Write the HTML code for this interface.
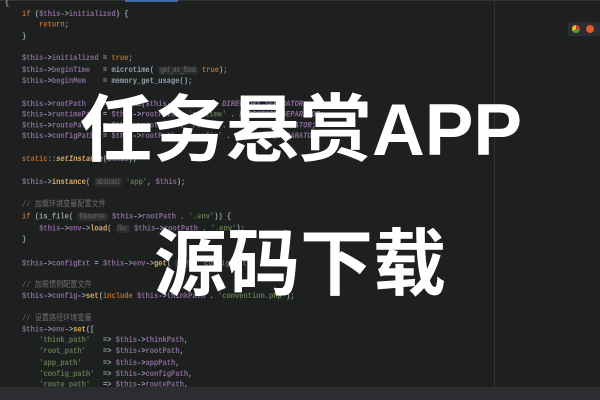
<!DOCTYPE html>
<html><head><meta charset="utf-8"><style>
html,body{margin:0;padding:0}
body{width:600px;height:400px;background:#1e1f1f;position:relative;overflow:hidden;font-family:"Liberation Mono","Noto Sans CJK SC",monospace}
.code{position:absolute;left:5px;top:-1px;font-size:7.1px;line-height:9.21px;color:#a9b7c6;white-space:pre;opacity:.85;transform:scaleY(1.2);transform-origin:0 0;font-weight:bold}
.p{color:#9876aa}.k{color:#cc7832}.s{color:#6a8759}.f{color:#ffc66d}.c{color:#7a7a7a;font-weight:normal}.h{background:#2f3030;color:#777;font-family:"Liberation Sans",sans-serif;font-size:6.5px;font-weight:normal;border-radius:2px;padding:0 2px}.i{color:#9876aa;font-style:italic}
.title{position:absolute;color:#fff;font-family:"Liberation Sans","Noto Sans CJK SC",sans-serif;font-weight:bold;font-size:73px;line-height:1;white-space:nowrap;letter-spacing:0}
</style></head><body>
<div style="position:absolute;left:0;top:0;width:600px;height:1px;background:#333"></div>
<div style="position:absolute;left:125px;top:0;width:53px;height:2px;background:#3d6ea8"></div>
<div style="position:absolute;left:494px;top:0;width:1px;height:387px;background:#303131"></div>
<div style="position:absolute;left:568px;top:22px;width:32px;height:14px;background:#2b2d30;border-radius:2px"></div>
<div style="position:absolute;left:572px;top:25px;width:8px;height:8px;border-radius:50%;background:conic-gradient(#d33 0 33%,#3a3 0 66%,#eb3 0)"></div>
<div style="position:absolute;left:586px;top:25px;width:8px;height:8px;border-radius:50%;background:#e5582a"></div>
<div class="code">{
    <span class="k">if</span> (<span class="p">$this</span>-><span class="p">initialized</span>) {
        <span class="k">return</span>;
    }

    <span class="p">$this</span>-><span class="p">initialized</span> = <span class="k">true</span>;
    <span class="p">$this</span>-><span class="p">beginTime</span>   = microtime( <span class="h">get_as_float</span> <span class="k">true</span>);
    <span class="p">$this</span>-><span class="p">beginMem</span>    = memory_get_usage();

    <span class="p">$this</span>-><span class="p">rootPath</span>    = dirname(<span class="p">$this</span>-><span class="p">appPath</span>) . <span class="i">DIRECTORY_SEPARATOR</span>;
    <span class="p">$this</span>-><span class="p">runtimePath</span> = <span class="p">$this</span>-><span class="p">rootPath</span> . <span class="s">'runtime'</span> . <span class="i">DIRECTORY_SEPARATOR</span>;
    <span class="p">$this</span>-><span class="p">routePath</span>   = <span class="p">$this</span>-><span class="p">rootPath</span> . <span class="s">'route'</span> . <span class="i">DIRECTORY_SEPARATOR</span>;
    <span class="p">$this</span>-><span class="p">configPath</span>  = <span class="p">$this</span>-><span class="p">rootPath</span> . <span class="s">'config'</span> . <span class="i">DIRECTORY_SEPARATOR</span>;

    <span class="k">static</span>::<span class="f" style="font-style:italic">setInstance</span>(<span class="p">$this</span>);

    <span class="p">$this</span>-><span class="f">instance</span>( <span class="h">abstract</span> <span class="s">'app'</span>, <span class="p">$this</span>);

    <span class="c">// 加载环境变量配置文件</span>
    <span class="k">if</span> (is_file( <span class="h">filename:</span> <span class="p">$this</span>-><span class="p">rootPath</span> . <span class="s">'.env'</span>)) {
        <span class="p">$this</span>-><span class="p">env</span>-><span class="f">load</span>( <span class="h">file:</span> <span class="p">$this</span>-><span class="p">rootPath</span> . <span class="s">'.env'</span>);
    }

    <span class="p">$this</span>-><span class="p">configExt</span> = <span class="p">$this</span>-><span class="p">env</span>-><span class="f">get</span>( <span class="h">name</span> <span class="s">'config_ext'</span>, <span class="s">'.php'</span>);

    <span class="c">// 加载惯例配置文件</span>
    <span class="p">$this</span>-><span class="p">config</span>-><span class="f">set</span>(<span class="k">include</span> <span class="p">$this</span>-><span class="p">thinkPath</span> . <span class="s">'convention.php'</span>);

    <span class="c">// 设置路径环境变量</span>
    <span class="p">$this</span>-><span class="p">env</span>-><span class="f">set</span>([
        <span class="s">'think_path'</span>   => <span class="p">$this</span>-><span class="p">thinkPath</span>,
        <span class="s">'root_path'</span>    => <span class="p">$this</span>-><span class="p">rootPath</span>,
        <span class="s">'app_path'</span>     => <span class="p">$this</span>-><span class="p">appPath</span>,
        <span class="s">'config_path'</span>  => <span class="p">$this</span>-><span class="p">configPath</span>,
        <span class="s">'route_path'</span>   => <span class="p">$this</span>-><span class="p">routePath</span>,
</div>
<div style="position:absolute;left:0;top:387px;width:600px;height:13px;background:#2b2d30"></div>
<div class="title" style="left:80px;top:94px">任务悬赏APP</div>
<div class="title" style="left:154px;top:228px">源码下载</div>
</body></html>
